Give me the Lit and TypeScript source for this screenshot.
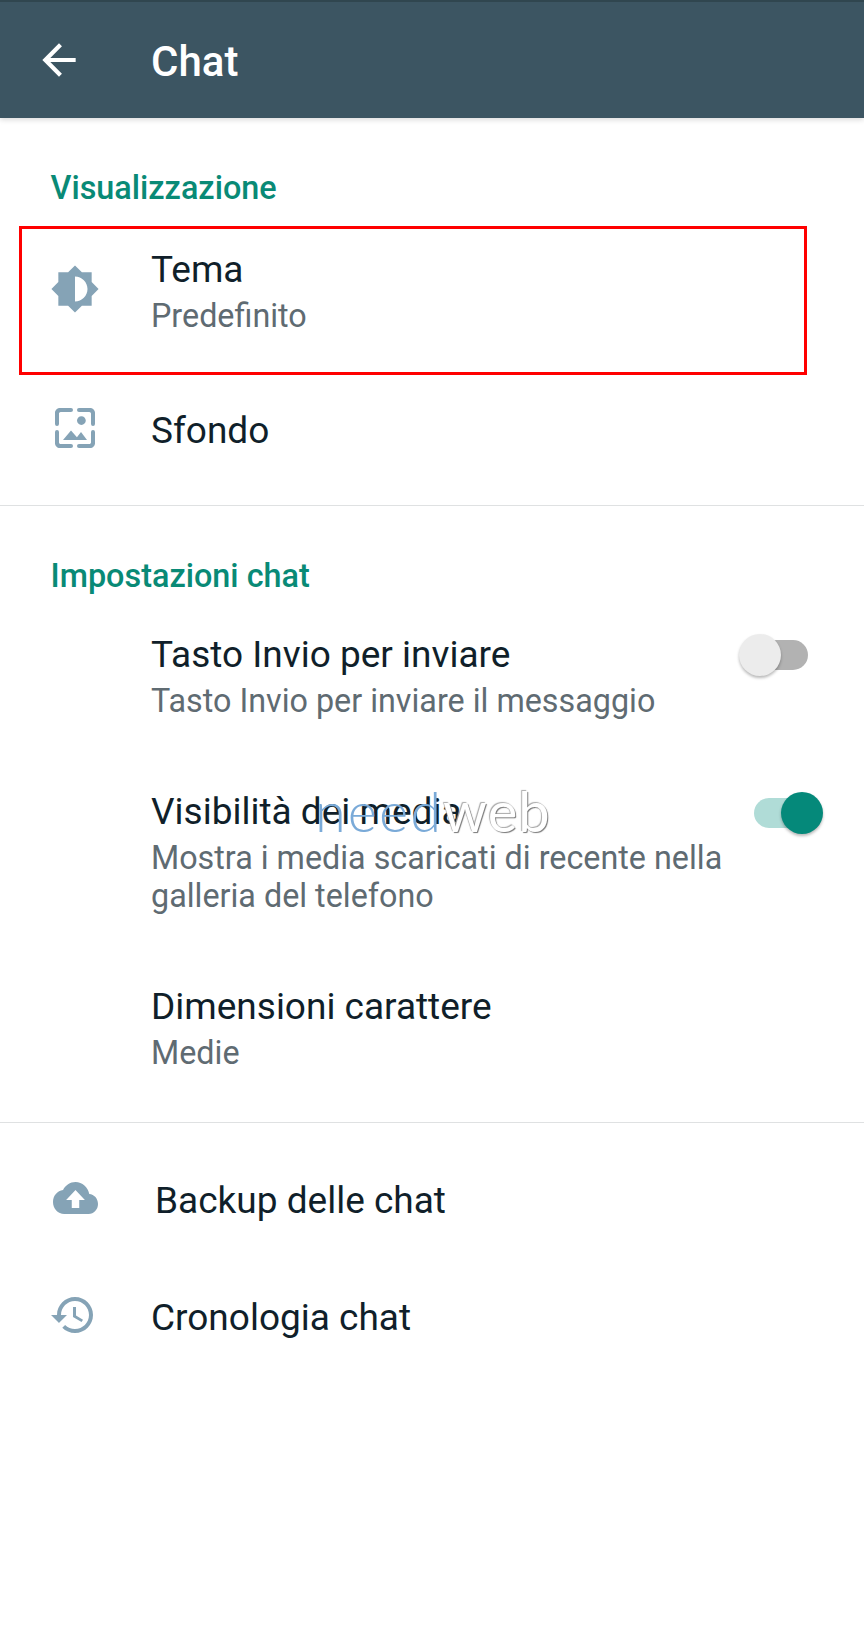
import { LitElement, html, css } from "lit";
import { customElement } from "lit/decorators.js";

const icons = {
  back: "M20 11H7.83l5.59-5.59L12 4l-8 8 8 8 1.41-1.41L7.83 13H20v-2z",
  theme: "M20 15.31L23.31 12 20 8.69V4h-4.69L12 .69 8.69 4H4v4.69L.69 12 4 15.31V20h4.69L12 23.31 15.31 20H20v-4.69zM12 18V6c3.31 0 6 2.69 6 6s-2.69 6-6 6z",
  wall: "M4.8 4H10a.9.9 0 0 0 0-2H4.4C3.1 2 2 3.1 2 4.4V10a.9.9 0 0 0 2 0V4.8c0-.4.4-.8.8-.8zm5.2 9.2l-4 4.8h12l-3-4-2.03 2.6L10 13.2zM17.4 8.3c0-1.2-1-2.2-2.2-2.2S13 7.1 13 8.3s1 2.2 2.2 2.2 2.2-1 2.2-2.2zM19.6 2H14a.9.9 0 0 0 0 2h5.2c.4 0 .8.4.8.8V10a.9.9 0 0 0 2 0V4.4C22 3.1 20.900 2 19.6 2zM20 19.200c0 .4-.4.8-.8.8H14a.9.9 0 0 0 0 2h5.600c1.300 0 2.400-1.100 2.400-2.400V14a.9.9 0 0 0-2 0v5.200zM4 14a.9.9 0 0 0-2 0v5.600C2 20.900 3.100 22 4.400 22H10a.9.9 0 0 0 0-2H4.800c-.4 0-.8-.4-.8-.8V14z",
  cloud: "M19.35 10.04C18.67 6.59 15.64 4 12 4 9.11 4 6.6 5.64 5.35 8.04 2.34 8.36 0 10.91 0 14c0 3.31 2.69 6 6 6h13c2.76 0 5-2.24 5-5 0-2.64-2.05-4.78-4.65-4.96zM14 13v4h-4v-4H7l5-5 5 5h-3z",
  history: "M13 3c-4.97 0-9 4.03-9 9H1l3.89 3.89.07.14L9 12H6c0-3.87 3.13-7 7-7s7 3.13 7 7-3.13 7-7 7c-1.93 0-3.68-.79-4.94-2.06l-1.42 1.42C8.27 19.99 10.51 21 13 21c4.97 0 9-4.03 9-9s-4.03-9-9-9zm-1 5v5l4.28 2.54.72-1.21-3.5-2.08V8H12z",
};

const icon = (d: string, cls = "icon") =>
  html`<svg class=${cls} viewBox="0 0 24 24" preserveAspectRatio="none" aria-hidden="true"><path d=${d}></path></svg>`;

@customElement("app-root")
export class AppRoot extends LitElement {
  static styles = css`
    :host {
      display: block;
      min-height: 1632px;
      background: #fff;
      font-family: Roboto, "Liberation Sans", sans-serif;
      color: #101f2a;
    }
    .bar {
      height: 116px;
      border-top: 2px solid #30464f;
      background: #3c5562;
      box-shadow: 0 2px 5px rgba(0, 0, 0, 0.14);
      display: flex;
      align-items: center;
      color: #fff;
    }
    .back {
      width: 50px;
      height: 50px;
      margin-left: 34px;
      margin-right: 67px;
      fill: #fff;
    }
    .bar h1 {
      margin: 3px 0 0;
      font-size: 42px;
      font-weight: 500;
      line-height: 48px;
    }
    .section {
      padding-top: 52px;
      border-bottom: 1px solid #dfe1e2;
    }
    .section.last {
      border-bottom: 0;
    }
    .head {
      margin: 0 0 0 50.5px;
      font-size: 32.4px;
      font-weight: 500;
      line-height: 36px;
      color: #098a76;
    }
    .list {
      display: flex;
      flex-direction: column;
    }
    .a {
      padding-top: 41px;
      padding-bottom: 53px;
      gap: 73px;
    }
    .b {
      padding-top: 38px;
      padding-bottom: 50px;
      gap: 69px;
    }
    .c {
      padding-top: 3px;
      gap: 73px;
    }
    .row {
      position: relative;
      display: flex;
      align-items: flex-start;
      padding-right: 40px;
    }
    .lead {
      flex: 0 0 151px;
      align-self: stretch;
      display: flex;
      align-items: center;
    }
    .icon {
      width: 48px;
      height: 48px;
      margin-left: 51px;
      margin-top: -4px;
      fill: #85a3b6;
    }
    .icon.theme {
      width: 50px;
      height: 50px;
      margin-left: 50px;
    }
    .icon.history {
      margin-left: 49px;
    }
    .icon.cloud {
      width: 45px;
      margin-left: 53px;
    }
    .text {
      flex: 1;
      min-width: 0;
    }
    .wide {
      padding-left: 4px;
    }
    .title {
      margin-top: 1px;
      margin-bottom: -1px;
      font-size: 37px;
      line-height: 44px;
    }
    .sub {
      margin-top: 6px;
      font-size: 32.3px;
      line-height: 38px;
      color: #5f6b72;
    }
    .highlight {
      position: absolute;
      left: 19px;
      right: 57px;
      top: -21px;
      bottom: -40px;
      border: 3px solid #f00;
      pointer-events: none;
    }
    .switch {
      position: relative;
      flex: 0 0 87px;
      height: 44px;
      margin-top: 1px;
    }
    .switch.on {
      margin-top: 2px;
    }
    .track {
      position: absolute;
      left: 17px;
      right: 16px;
      top: 7px;
      height: 30px;
      border-radius: 15px;
      background: #b2b2b2;
    }
    .thumb {
      position: absolute;
      left: 2px;
      top: 1px;
      width: 42px;
      height: 42px;
      border-radius: 50%;
      background: #ececec;
      box-shadow: 0 2px 3px rgba(0, 0, 0, 0.28);
    }
    .on .track {
      background: #b0dcd7;
    }
    .on .thumb {
      left: 44px;
      background: #05897a;
    }
    .mark {
      position: absolute;
      left: 315px;
      top: -9px;
      font-family: Lato, sans-serif;
      font-weight: 300;
      font-size: 56px;
      line-height: 62px;
      letter-spacing: 2px;
      white-space: nowrap;
      pointer-events: none;
    }
    .need {
      color: #7aaad8;
    }
    .web {
      font-weight: 400;
      letter-spacing: 1px;
      color: #fff;
      text-shadow: 1px 1px 1px #777, -1px -1px 1px #aaa;
    }
  `;

  render() {
    return html`
      <header class="bar">
        ${icon(icons.back, "back")}
        <h1>Chat</h1>
      </header>
      <section class="section">
        <h2 class="head">Visualizzazione</h2>
        <div class="list a">
          <div class="row">
            <div class="lead">${icon(icons.theme, "icon theme")}</div>
            <div class="text">
              <div class="title">Tema</div>
              <div class="sub">Predefinito</div>
            </div>
            <div class="highlight"></div>
          </div>
          <div class="row">
            <div class="lead">${icon(icons.wall)}</div>
            <div class="text"><div class="title">Sfondo</div></div>
          </div>
        </div>
      </section>
      <section class="section">
        <h2 class="head">Impostazioni chat</h2>
        <div class="list b">
          <div class="row">
            <div class="lead"></div>
            <div class="text">
              <div class="title">Tasto Invio per inviare</div>
              <div class="sub">Tasto Invio per inviare il messaggio</div>
            </div>
            <div class="switch"><span class="track"></span><span class="thumb"></span></div>
          </div>
          <div class="row">
            <div class="lead"></div>
            <div class="text">
              <div class="title">Visibilità dei media</div>
              <div class="sub">Mostra i media scaricati di recente nella galleria del telefono</div>
            </div>
            <div class="switch on"><span class="track"></span><span class="thumb"></span></div>
            <div class="mark"><span class="need">need</span><span class="web">web</span></div>
          </div>
          <div class="row">
            <div class="lead"></div>
            <div class="text">
              <div class="title">Dimensioni carattere</div>
              <div class="sub">Medie</div>
            </div>
          </div>
        </div>
      </section>
      <section class="section last">
        <div class="list c">
          <div class="row">
            <div class="lead">${icon(icons.cloud, "icon cloud")}</div>
            <div class="text wide"><div class="title">Backup delle chat</div></div>
          </div>
          <div class="row">
            <div class="lead">${icon(icons.history, "icon history")}</div>
            <div class="text"><div class="title">Cronologia chat</div></div>
          </div>
        </div>
      </section>
    `;
  }
}
